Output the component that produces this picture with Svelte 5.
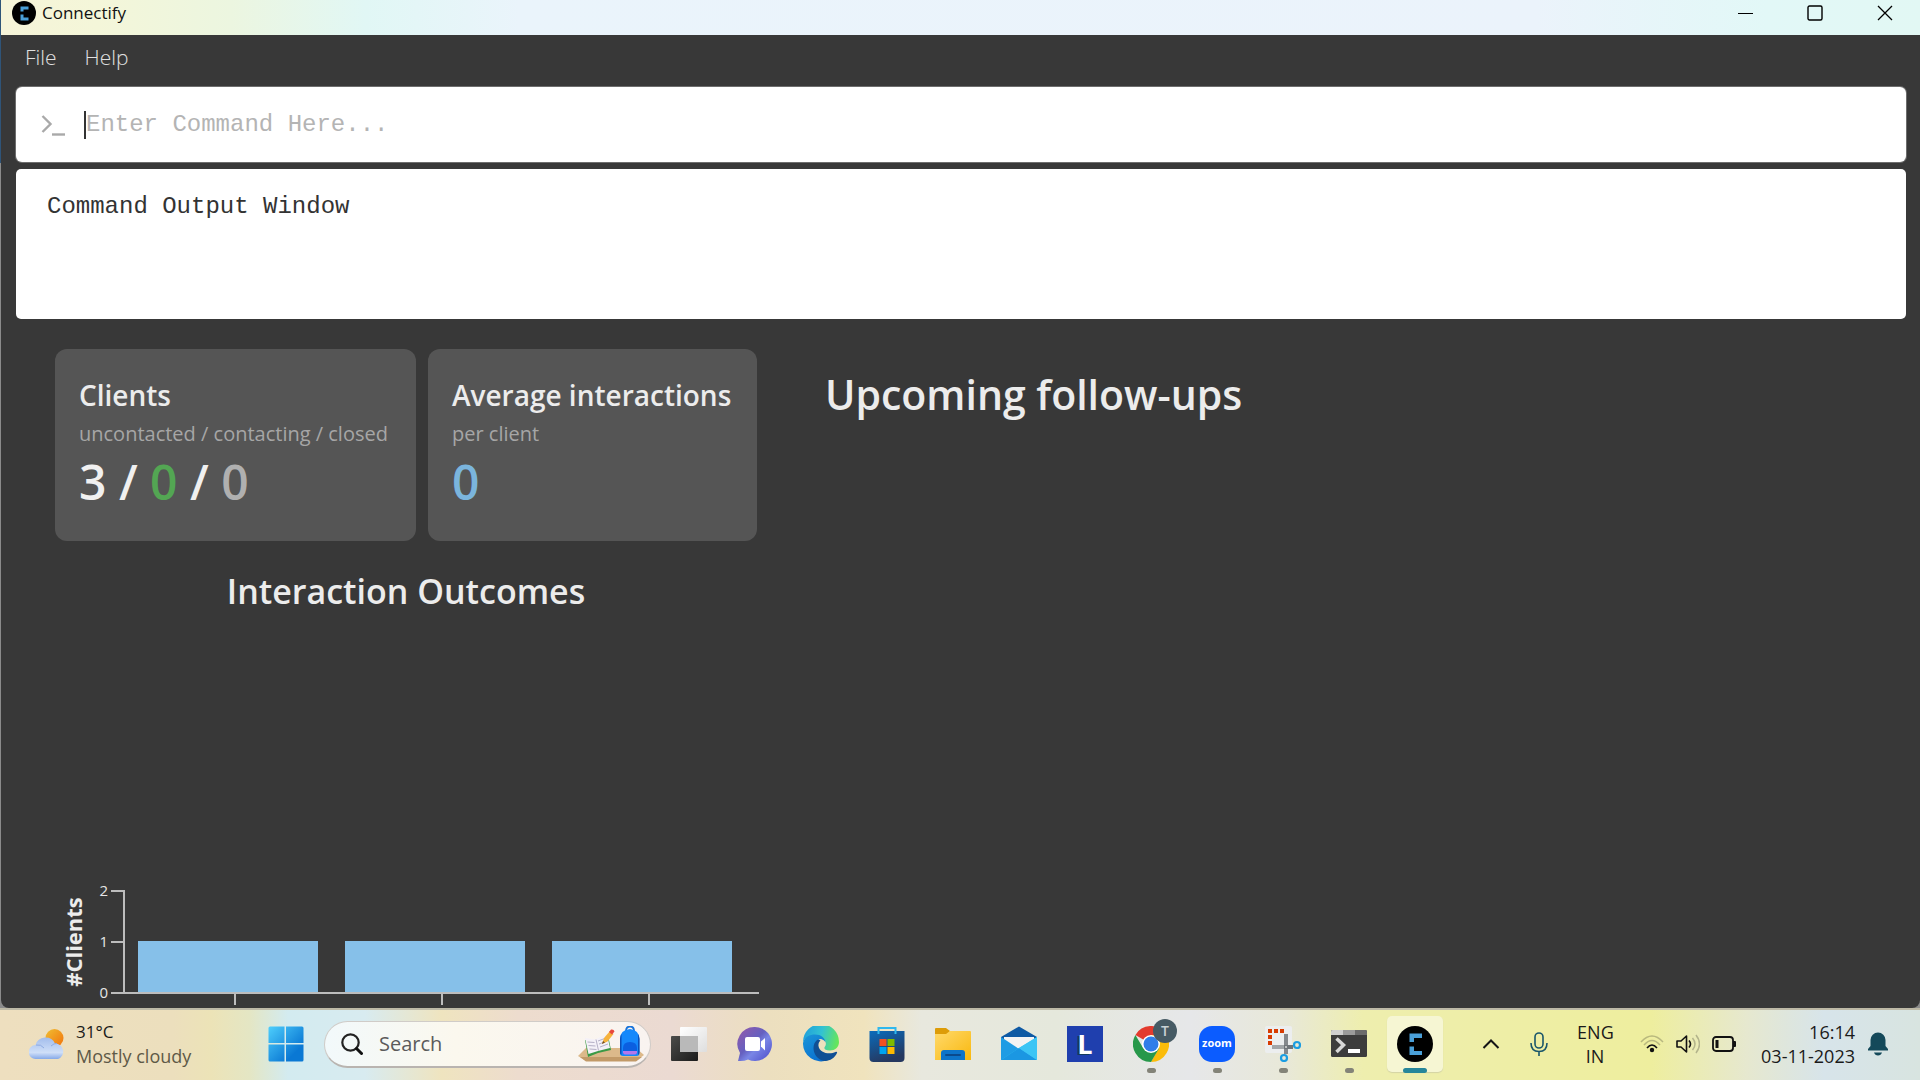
<script>
  const cards = [
    {
      title: 'Clients',
      note: 'uncontacted / contacting / closed',
      parts: [
        { text: '3 / ', tone: 'plain' },
        { text: '0', tone: 'green' },
        { text: ' / ', tone: 'plain' },
        { text: '0', tone: 'grey' }
      ]
    },
    { title: 'Average interactions', note: 'per client', parts: [{ text: '0', tone: 'blue' }] }
  ];

  const outcomes = [1, 1, 1];
  const unit = 51;
  const ticks = [0, 1, 2];
  const base = 102;

  let command = $state('');
</script>

<div class="screen">
  <div class="window">
    <header class="titlebar">
      <svg class="logo" viewBox="0 0 24 24" aria-hidden="true">
        <circle cx="12" cy="12" r="12" fill="#000" />
        <path d="M16.500 5.500H8.500V10.500h3V8.500h5zM8.500 13.500v6h8v-3h-5v-3z" fill="#4a9fd8" />
      </svg>
      <span class="app-name">Connectify</span>
      <div class="controls">
        <button aria-label="Minimize">
          <svg viewBox="0 0 16 16"><path d="M0 8.500h15" stroke="#000" fill="none" /></svg>
        </button>
        <button aria-label="Maximize">
          <svg viewBox="0 0 16 16"><rect x="1" y="1" width="14" height="14" rx="1.500" fill="none" stroke="#000" stroke-width="1.400" /></svg>
        </button>
        <button aria-label="Close">
          <svg viewBox="0 0 16 16"><path d="M1 1l14 14M15 1L1 15" stroke="#000" stroke-width="1.300" fill="none" /></svg>
        </button>
      </div>
    </header>

    <nav class="menu">
      <button>File</button>
      <button>Help</button>
    </nav>

    <main>
      <label class="command">
        <svg viewBox="0 0 24 22" aria-hidden="true">
          <path d="M1.500 2l8 8-8 8" fill="none" stroke="#a9a9a9" stroke-width="2.400" />
          <path d="M11 20.500h13" stroke="#a9a9a9" stroke-width="2.400" />
        </svg>
        <span class="caret"></span>
        <input type="text" aria-label="Command" placeholder="Enter Command Here..." bind:value={command} />
      </label>

      <output class="result">Command Output Window</output>

      <div class="panes">
        <section class="stats">
          <div class="cards">
            {#each cards as card}
              <article class="card">
                <h3>{card.title}</h3>
                <p class="note">{card.note}</p>
                <p class="value">{#each card.parts as part}<span class={part.tone}>{part.text}</span>{/each}</p>
              </article>
            {/each}
          </div>
          <h2 class="outcomes">Interaction Outcomes</h2>
          <svg class="chart" width="702" height="126" viewBox="0 0 702 126" role="img" aria-label="Clients per outcome">
            <g transform="translate(0 9)">
              <text class="axis-title" transform="translate(27 51) rotate(-90)" text-anchor="middle">#Clients</text>
              {#each ticks as tick}
                <text class="tick" x="53" y={base - tick * unit + 5} text-anchor="end">{tick}</text>
                <path d="M56 {base - tick * unit}h13" />
              {/each}
              {#each outcomes as count, i}
                <rect x={83 + i * 207} y={base - 1 - count * unit} width="180" height={count * unit} fill="#86c0e9" />
                <path d="M{180 + i * 207} {base}v12" />
              {/each}
              <path d="M69 -1v104M56 {base}h648" />
            </g>
          </svg>
        </section>
        <section class="follow">
          <h1>Upcoming follow-ups</h1>
        </section>
      </div>
    </main>
  </div>

  <footer class="taskbar">
    <button class="weather">
      <svg viewBox="0 0 36 30" aria-hidden="true">
        <defs>
          <linearGradient id="sun" x1="0" y1="0" x2="1" y2="1"><stop offset="0" stop-color="#f0be32" /><stop offset="1" stop-color="#f2720c" /></linearGradient>
          <linearGradient id="cloud" x1="0" y1="0" x2="0" y2="1"><stop offset="0" stop-color="#a3bdec" /><stop offset=".7" stop-color="#cfdff8" /><stop offset="1" stop-color="#86a9e8" /></linearGradient>
        </defs>
        <circle cx="25.500" cy="9" r="9" fill="url(#sun)" />
        <path d="M7 30a7 7 0 0 1-.5-14A10.500 10.500 0 0 1 26 14.500 8 8 0 0 1 29 30z" fill="url(#cloud)" />
        <path d="M7 16q5-1 8 3M22 17q3-3 6-2.500" fill="none" stroke="#8fabe2" stroke-width="1" />
      </svg>
      <span><b>31°C</b><i>Mostly cloudy</i></span>
    </button>

    <div class="apps">
      <button class="app" aria-label="Start">
        <svg viewBox="0 0 36 36">
          <defs><linearGradient id="win" gradientUnits="userSpaceOnUse" x1="0" y1="0" x2="36" y2="36"><stop offset="0" stop-color="#4fd0fd" /><stop offset=".75" stop-color="#0a78d4" /></linearGradient></defs>
          <path d="M2 .5h14.500v16.500H.5V2Q.500.500 2 .500zM18 .500h16q1.500 0 1.500 1.500v15H18zM.5 18.500h16v17H2q-1.500 0-1.500-1.500zM18 18.500h17.500V34q0 1.500-1.500 1.500H18z" fill="url(#win)" />
        </svg>
      </button>

      <label class="search">
        <svg class="lens" viewBox="0 0 22 22" aria-hidden="true">
          <circle cx="9.500" cy="9.500" r="8.200" fill="none" stroke="#222" stroke-width="2.200" />
          <path d="M15.500 15.500l5 5" stroke="#111" stroke-width="3" stroke-linecap="round" />
        </svg>
        <input type="text" aria-label="Search" placeholder="Search" />
        <svg class="promo" viewBox="0 0 66 36" aria-hidden="true">
          <path d="M0 30l8-8h50l8 7-8 6H8z" fill="#dcb98a" />
          <path d="M2 31h62l-6 4.500H8z" fill="#c29a68" />
          <path d="M7 14l10 1 13-6 3 15-13 3-10 4z" fill="#3b9a46" />
          <path d="M7 12l10 1.500L29 8l3 14-12 3-9.500 3z" fill="#f4f1f8" />
          <path d="M18 13.500l2.500 11M9.500 16l7 .5M10.500 19.500l7 .5M11.500 23l7 .5M20 15l8-3M21 18l8-3M22 21l8-3" fill="none" stroke="#b5b0c6" />
          <path d="M24 18l2-6 6-7 3.500 3-6 7.500z" fill="#f6b23c" />
          <path d="M31 6l2-2.500q3-.500 3.500 2L34 8.500z" fill="#e8483e" />
          <path d="M24 18l1-3 2 1.500z" fill="#6b4b2b" />
          <path d="M48 5q0-4.500 4-4.500T56 5" fill="none" stroke="#1773db" stroke-width="1.800" />
          <path d="M42 13q0-9 10-10 9 1 9.500 10v14q0 3-3 3H45q-3 0-3-3z" fill="#1588fb" />
          <path d="M42 13q0-3 1.500-5v21Q42 28 42 27zM61.500 13q0-3-1.500-5v21q1.500-1 1.500-3z" fill="#0c4fb8" />
          <path d="M45 22q0-6 7-6t7 6v6H45z" fill="#0b5fe0" />
          <path d="M45 25h14v1.500q0 2-2 2H47q-2 0-2-2z" fill="#b377ec" />
        </svg>
      </label>

      <button class="app" aria-label="Task view">
        <svg viewBox="0 0 36 36">
          <defs>
            <linearGradient id="tvd" x1="0" y1="0" x2="1" y2="1"><stop offset="0" stop-color="#4c4c4a" /><stop offset="1" stop-color="#1b1b1b" /></linearGradient>
            <linearGradient id="tvl" x1="0" y1="0" x2="1" y2="1"><stop offset="0" stop-color="#fff" /><stop offset="1" stop-color="#dedede" /></linearGradient>
          </defs>
          <rect x="0" y="10" width="27" height="25" rx="1" fill="url(#tvd)" />
          <rect x="9" y="1" width="27" height="25" rx="1" fill="url(#tvl)" />
          <rect x="9" y="10" width="18" height="16" fill="#b9b9b9" />
        </svg>
      </button>

      <button class="app" aria-label="Chat">
        <svg viewBox="0 0 36 36">
          <defs><linearGradient id="chat" x1="0" y1="0" x2="1" y2="1"><stop offset="0" stop-color="#9659a8" /><stop offset=".45" stop-color="#6560c0" /><stop offset=".6" stop-color="#7a86e6" /><stop offset="1" stop-color="#4b4bc8" /></linearGradient></defs>
          <path d="M18 1a17 17 0 1 1-7 32.500Q7 35.500 1 35l2-8A17 17 0 0 1 18 1z" fill="url(#chat)" />
          <rect x="8" y="11" width="15" height="14" rx="2" fill="#fff" />
          <path d="M24 15.500l4-3.500v12.500l-4-4z" fill="#fff" />
        </svg>
      </button>

      <button class="app" aria-label="Edge">
        <svg viewBox="0 0 36 36">
          <defs>
            <linearGradient id="eg" x1="0" y1=".3" x2="1" y2=".5"><stop offset="0" stop-color="#1f9fdc" /><stop offset=".5" stop-color="#33c2d2" /><stop offset="1" stop-color="#66e65a" /></linearGradient>
            <linearGradient id="eb" x1="0" y1="0" x2=".6" y2="1"><stop offset="0" stop-color="#1b96d8" /><stop offset="1" stop-color="#0a70d0" /></linearGradient>
          </defs>
          <path d="M0 16A18 18 0 0 1 36 16c0 5-4 8.500-9 8.500-5.500 0-6.500-2-5-4 2-3 .500-7.500-4-7.500C11 9.500 3 10 0 16z" fill="url(#eg)" />
          <path d="M0 17c1-6 7-8.500 12-8.500 6 0 10 3.500 10.500 8-1-2-3-3.500-5.500-3.500-4.500 2-5.500 8-3 13 2.500 5 7 8 11 8A18 18 0 0 1 0 17z" fill="url(#eb)" />
          <path d="M14 14c-6 5-4 16 4 20 6 2.500 13-.500 16-7 .500-1-.500-1.500-1.500-1-6 3-16 1-17-6-.200-2.500.500-4 2-5.500-1-.700-2.500-.900-3.500-.500z" fill="#104f94" />
        </svg>
      </button>

      <button class="app" aria-label="Store">
        <svg viewBox="0 0 36 36">
          <defs><linearGradient id="st" x1="0" y1="0" x2=".4" y2="1"><stop offset="0" stop-color="#0a6cbc" /><stop offset="1" stop-color="#26385f" /></linearGradient></defs>
          <path d="M.5 5h35v27q0 4-4 4h-27q-4 0-4-4z" fill="url(#st)" />
          <path d="M9.500 8V2h17v6" fill="none" stroke="#2fb8ee" stroke-width="2" />
          <path d="M10.500 13h7v7h-7z" fill="#f25022" /><path d="M18.500 13h7v7h-7z" fill="#7fba00" />
          <path d="M10.500 21h7v7h-7z" fill="#00a4ef" /><path d="M18.500 21h7v7h-7z" fill="#ffb900" />
        </svg>
      </button>

      <button class="app" aria-label="File Explorer">
        <svg viewBox="0 0 36 36">
          <defs><linearGradient id="fo" x1="0" y1="0" x2="1" y2="1"><stop offset="0" stop-color="#ffd96b" /><stop offset="1" stop-color="#f9b80e" /></linearGradient></defs>
          <path d="M0 3q0-1 1-1h10l4 3-4 6H0z" fill="#dd9c08" />
          <path d="M0 8h11l4-3h20q1 0 1 1v28H0z" fill="url(#fo)" />
          <path d="M6 34v-7q0-3 3-3h18q3 0 3 3v7z" fill="#0d74c9" />
          <path d="M11 29h14" stroke="#0b4a8c" stroke-width="2" stroke-linecap="round" />
        </svg>
      </button>

      <button class="app" aria-label="Mail">
        <svg viewBox="0 0 36 36">
          <path d="M0 11L18 .500 36 11v8H0z" fill="#0e59a4" />
          <path d="M3 11h30v8L18 23 3 19z" fill="#f3f3f3" />
          <path d="M0 11l18 12v11H0z" fill="#1f9ce4" />
          <path d="M36 11L18 22 0 34h36z" fill="#38c6f4" />
          <path d="M0 34h36L18 22z" fill="#1b97e2" />
          <path d="M18 22l18 12V11z" fill="#3cc5f5" />
        </svg>
      </button>

      <button class="app" aria-label="L">
        <span class="tile">L</span>
      </button>

      <button class="app running" aria-label="Chrome">
        <svg viewBox="0 0 36 36">
          <path d="M18 18L2.400 9A18 18 0 0 1 33.600 9z" fill="#e33b2e" />
          <path d="M18 18V9h15.600A18 18 0 0 1 18 36l8-14z" fill="#fbbc0a" />
          <path d="M18 18l8 4.500L18 36A18 18 0 0 1 2.400 9l8 13.500z" fill="#27984a" />
          <circle cx="18" cy="18" r="9" fill="#fff" /><circle cx="18" cy="18" r="7.500" fill="#2f7de9" />
        </svg>
        <span class="badge">T</span>
      </button>

      <button class="app running" aria-label="Zoom">
        <span class="zoom">zoom</span>
      </button>

      <button class="app running" aria-label="Snipping Tool">
        <svg viewBox="0 0 36 36">
          <rect x="0" y="0" width="27" height="27" rx="2" fill="#eceeef" />
          <path d="M3 5h18" stroke="#d83b01" stroke-width="4" stroke-dasharray="4 2" />
          <path d="M5 9v10" stroke="#d83b01" stroke-width="4" stroke-dasharray="4 2" />
          <path d="M21 8v20" stroke="#85898d" stroke-width="4" /><path d="M7 21h21" stroke="#a2a6a9" stroke-width="4" />
          <path d="M19 21h9" stroke="#70757a" stroke-width="4" /><circle cx="21" cy="21" r="1" fill="#ddd" />
          <circle cx="32" cy="19" r="3" fill="none" stroke="#1b9de2" stroke-width="2.200" />
          <circle cx="19" cy="32" r="3" fill="none" stroke="#1b9de2" stroke-width="2.200" />
        </svg>
      </button>

      <button class="app running" aria-label="Terminal">
        <svg viewBox="0 0 36 36">
          <rect x="0" y="4" width="36" height="27" rx="1.500" fill="#3c3c3c" />
          <path d="M1.500 4H12v5H0V5.500Q0 4 1.500 4z" fill="#cfcfcf" /><path d="M12 4h12v5H12z" fill="#9b9b9b" /><path d="M24 4h10.500q1.500 0 1.500 1.500V9H24z" fill="#6b6b6b" />
          <path d="M5.500 12.500l7 6.500-7 7" fill="none" stroke="#d8d8d8" stroke-width="3.500" />
          <path d="M17 25h12" stroke="#fff" stroke-width="4" />
        </svg>
      </button>

      <button class="app running active" aria-label="Connectify">
        <svg viewBox="0 0 36 36">
          <circle cx="18" cy="18" r="18" fill="#000" />
          <path d="M25 7.500H12.500V16H17v-4h8zM12.500 20.500V29H25v-4h-8v-4.500z" fill="#4a9fd8" />
        </svg>
      </button>
    </div>

    <div class="tray">
      <button class="chevron" aria-label="Show hidden icons">
        <svg width="18" height="12" viewBox="0 0 18 12"><path d="M1.500 10L9 2.500l7.500 7.500" fill="none" stroke="#151515" stroke-width="2" /></svg>
      </button>
      <button class="mic" aria-label="Microphone">
        <svg width="18" height="24" viewBox="0 0 18 24"><rect x="5" y="1" width="8" height="15" rx="4" fill="none" stroke="#19566a" stroke-width="1.600" /><path d="M1 11q0 8.500 8 8.500t8-8.500M9 19.500V24" fill="none" stroke="#19566a" stroke-width="1.600" /></svg>
      </button>
      <button class="lang"><span>ENG</span><span>IN</span></button>
      <button class="status" aria-label="Network, volume and battery">
        <svg width="24" height="18" viewBox="0 0 24 18">
          <path d="M1 7q11-12 22 0M4 10q8-9 16 0" fill="none" stroke="#1a1a1a" stroke-opacity=".25" stroke-width="1.500" />
          <path d="M7 13q5-6 10 0" fill="none" stroke="#111" stroke-width="1.600" /><circle cx="12" cy="15" r="2.200" fill="#111" />
        </svg>
        <svg width="24" height="20" viewBox="0 0 24 20">
          <path d="M1 7h4l5.500-5v16L5 13H1z" fill="none" stroke="#111" stroke-width="1.600" stroke-linejoin="round" />
          <path d="M13 6.500q3 3.500 0 7" fill="none" stroke="#111" stroke-width="1.600" />
          <path d="M16.500 4q5 6 0 12M20 1q7 9 0 18" fill="none" stroke="#111" stroke-opacity=".25" stroke-width="1.500" />
        </svg>
        <svg width="24" height="16" viewBox="0 0 24 16">
          <rect x="1" y="1" width="20" height="14" rx="3" fill="none" stroke="#111" stroke-width="1.800" /><rect x="3.500" y="4" width="3" height="8" fill="#111" /><path d="M21 5h2q1 0 1 1v4q0 1-1 1h-2z" fill="#111" />
        </svg>
      </button>
      <button class="clock"><span>16:14</span><span>03-11-2023</span></button>
      <button class="bell" aria-label="Notifications">
        <svg width="20" height="24" viewBox="0 0 20 24"><path d="M10 .500a7.500 7.500 0 0 1 7.500 7.500v6l2.500 3v1.500H0V17l2.500-3V8A7.500 7.500 0 0 1 10 .500zM6 20.500h8q-1 3-4 3t-4-3z" fill="#14495a" /></svg>
      </button>
    </div>
  </footer>
</div>

<style>
  :global(body) { margin: 0; }
  .screen {
    min-height: 100vh;
    display: flex;
    flex-direction: column;
    font-family: 'Open Sans', 'Noto Sans', sans-serif;
    color: #ececec;
    background: linear-gradient(#2f5478 0 163px, #8b8b8b 163px);
  }
  button { border: 0; padding: 0; background: none; color: inherit; font: inherit; }
  svg { display: block; }
  h1, h2, h3, p { margin: 0; }

  .window {
    flex: 1;
    display: flex;
    flex-direction: column;
    margin-left: 1px;
    background: #383838;
    border-radius: 0 0 8px 8px;
  }
  .titlebar {
    height: 35px;
    box-sizing: border-box;
    padding: 0 0 10px 11px;
    display: flex;
    align-items: center;
    gap: 6px;
    color: #111;
    background: linear-gradient(90deg, #f6f4d8 0, #f4f6d9 5%, #ecf6e0 12%, #e1f7f5 19%, #eaf4fb 27%, #ebf3fb 80%, #e2f8f7 92%, #e2f8f4 100%);
  }
  .logo { width: 24px; height: 24px; }
  .app-name { font-size: 17px; line-height: 24px; }
  .controls { margin-left: auto; display: flex; }
  .controls button { width: 68px; height: 24px; display: grid; place-items: center; }
  .controls button + button { width: 70px; }
  .controls svg { width: 16px; height: 16px; }

  .menu { height: 52px; display: flex; gap: 28px; padding: 0 24px; font-size: 21px; font-weight: 300; }
  .menu button { height: 44px; color: #e0e0e0; }

  main { flex: 1; display: flex; flex-direction: column; padding: 0 14px 0 15px; }
  .command {
    height: 75px;
    display: flex;
    align-items: center;
    padding: 0 25px;
    box-shadow: 0 0 0 1px #6d6d6d;
    border-radius: 6px;
    background: #fff;
  }
  .command svg { width: 24px; height: 22px; }
  .caret { width: 2px; height: 28px; margin-left: 19px; background: #333; }
  input { min-width: 0; flex: 1; border: 0; padding: 0; outline: 0; background: none; }
  .command input { font: 24px 'Liberation Mono', monospace; color: #333; }
  .command input::placeholder { color: #b4b4b4; opacity: 1; }
  .result {
    display: block;
    height: 150px;
    box-sizing: border-box;
    margin-top: 7px;
    padding: 23px 31px;
    border-radius: 5px;
    background: #fff;
    color: #333;
    font: 24px/30px 'Liberation Mono', monospace;
  }

  .panes { flex: 1; display: flex; gap: 68px; padding: 30px 39px 0; }
  .stats { width: 702px; flex: none; display: flex; flex-direction: column; }
  .cards { display: grid; grid-template-columns: 361fr 329fr; gap: 12px; }
  .card {
    height: 192px;
    box-sizing: border-box;
    padding: 26px 24px;
    border-radius: 12px;
    background: #555;
  }
  h1, h2, h3 { font-weight: 600; white-space: nowrap; }
  h3 { font-size: 28px; line-height: 41px; }
  .note { font-size: 20px; line-height: 36px; color: #a6a6a6; white-space: nowrap; }
  .value { font-size: 48px; line-height: 60px; font-weight: 600; white-space: pre; }
  .plain { color: #f0f0f0; }
  .green { color: #53a653; }
  .grey { color: #b0b0b0; }
  .blue { color: #7bb5dd; }
  .outcomes { margin-top: 24px; text-align: center; font-size: 34px; line-height: 52px; }
  .chart { margin-top: auto; overflow: visible; }
  .chart path { stroke: #bdbdbd; stroke-width: 2; fill: none; }
  .axis-title { font-size: 22px; font-weight: 700; fill: #ececec; }
  .tick { font-size: 15px; fill: #e6e6e6; }
  .follow { padding-top: 15px; }
  h1 { font-size: 41px; line-height: 60px; }

  .taskbar {
    height: 72px;
    box-sizing: border-box;
    border-top: 2px solid #bdb9a6;
    padding-bottom: 2px;
    display: flex;
    align-items: center;
    color: #1a1a1a;
    background: linear-gradient(90deg, #eedfbf 0, #ecdfbd 9%, #ece3b7 11%, #e4e6c4 13%, #d3ebf0 15%, #d8ebf0 19%, #efe4bf 23%, #eddcce 27%, #ebdad2 35%, #ecdfbf 40%, #f0e3bd 45%, #e8e8de 48%, #e5e8dc 55%, #e6e7e9 62%, #e8e8d8 67%, #eeeeae 71%, #eeee9e 86%, #e6e8cf 91%, #d7e4ea 95%, #d8e4e0 100%);
  }
  .weather { width: 258px; box-sizing: border-box; padding-left: 29px; display: flex; align-items: center; gap: 11px; text-align: left; flex: none; }
  .weather svg { width: 36px; height: 30px; }
  .weather b, .weather i { display: block; font: 17px/24px 'Open Sans', sans-serif; }
  .weather i { color: #5e5947; font-size: 18px; }
  .apps { display: flex; align-items: center; gap: 10px; flex: none; }
  .app { width: 56px; height: 56px; display: grid; place-items: center; position: relative; border-radius: 5px; }
  .app svg { width: 36px; height: 36px; }
  .active { background: #f6f6d3; box-shadow: 0 1px 1px #d3d3a5; }
  .running::after { content: ''; position: absolute; left: 24px; bottom: -1px; width: 9px; height: 5px; border-radius: 3px; background: #838378; }
  .active::after { left: 16px; width: 24px; background: #26869a; }
  .search {
    width: 327px;
    height: 47px;
    box-sizing: border-box;
    display: flex;
    align-items: center;
    padding: 0 6px 0 16px;
    border: 1px solid #d0ccc8;
    border-bottom: 2px solid #b9b4b0;
    border-radius: 24px;
    background: linear-gradient(90deg, #f2f9fb, #fbf8ee 40%, #f9f3f0);
  }
  .lens { width: 22px; height: 22px; }
  .search input { margin-left: 16px; font: 20px/28px 'Open Sans', sans-serif; color: #333; }
  .search input::placeholder { color: #5b5b5b; opacity: 1; }
  .promo { width: 66px; height: 36px; }
  .tile { width: 36px; height: 36px; background: #1f3fae; color: #fff; font: 700 27px/35px 'Open Sans', sans-serif; text-shadow: -2px 1px #143a5c; }
  .badge { position: absolute; right: 2px; top: 3px; width: 24px; height: 24px; border-radius: 50%; background: #465a64; color: #c9d2d6; font-size: 14px; line-height: 24px; font-weight: 600; }
  .zoom { width: 36px; height: 36px; border-radius: 13px; background: #0b5cff; color: #fff; font-size: 11px; line-height: 34px; font-weight: 700; }
  .tray { margin-left: auto; display: flex; align-items: center; font-size: 18px; line-height: 24px; padding-right: 32px; }
  .mic { margin-left: 30px; }
  .lang { margin-left: 29px; width: 36px; }
  .lang span, .clock span { display: block; }
  .status { margin-left: 27px; display: flex; align-items: center; gap: 12px; }
  .clock { margin-left: 25px; text-align: right; }
  .bell { margin-left: 13px; }
</style>
